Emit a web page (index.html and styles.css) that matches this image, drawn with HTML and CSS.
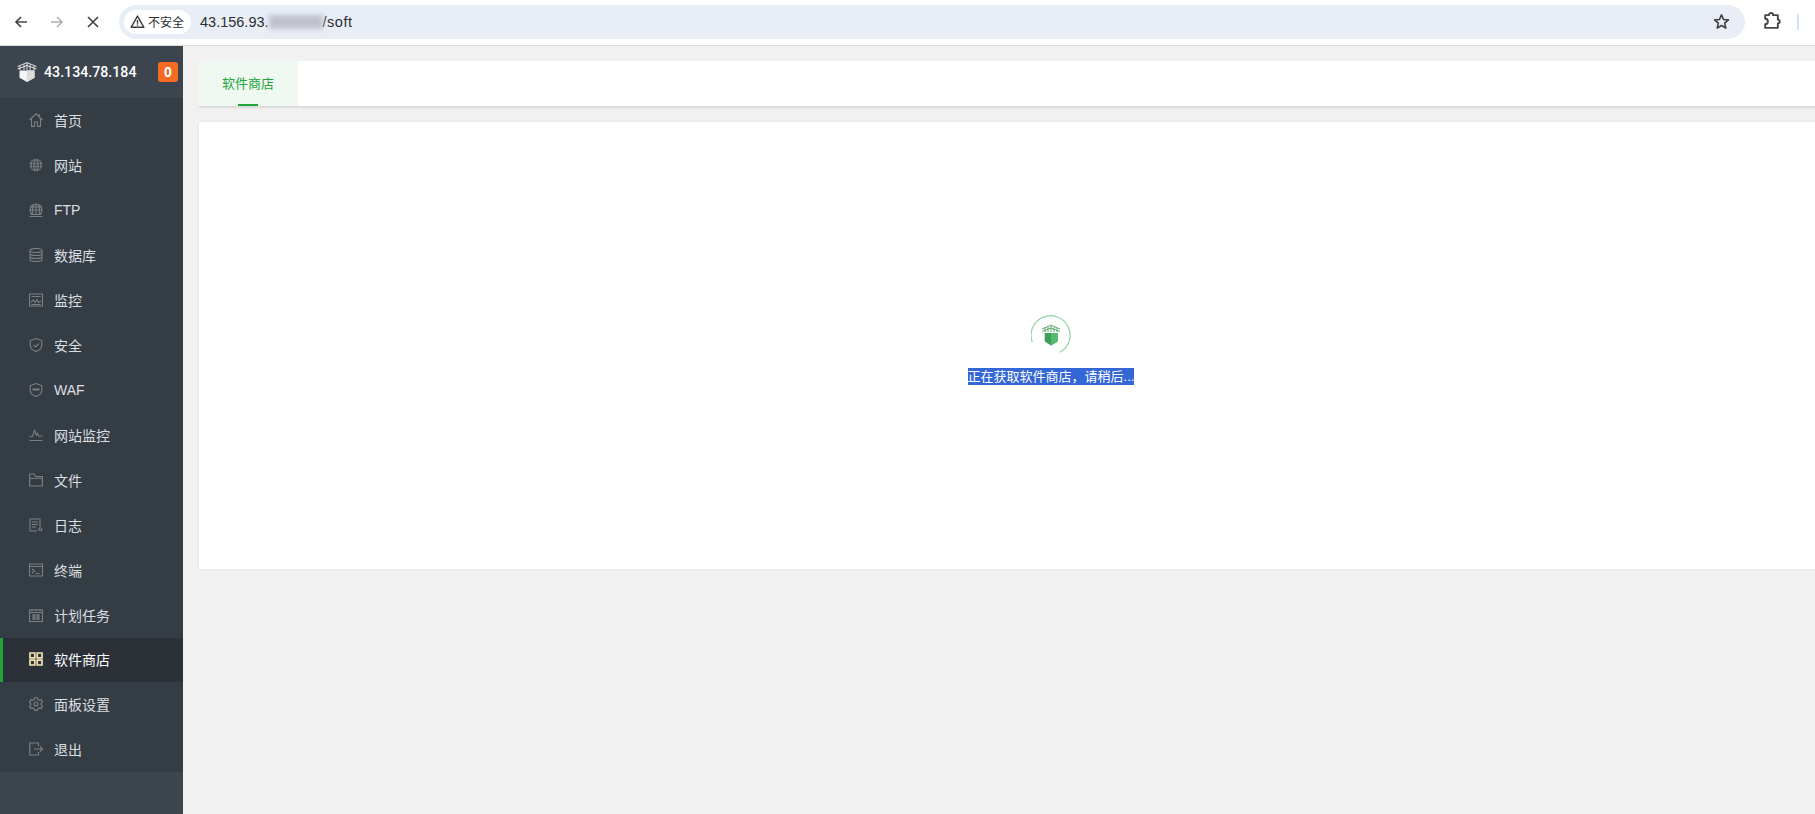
FILE: index.html
```html
<!DOCTYPE html>
<html lang="zh">
<head>
<meta charset="utf-8">
<title>软件商店</title>
<link rel="stylesheet" href="styles.css">
</head>
<body>
<header class="chrome">
  <svg class="nav-btn" viewBox="0 0 16 16"><path d="M14 8H3M8 3L3 8l5 5" class="st-dark"/></svg>
  <svg class="nav-btn" viewBox="0 0 16 16"><path d="M2 8h11M8 3l5 5-5 5" class="st-light"/></svg>
  <svg class="nav-btn" viewBox="0 0 16 16"><path d="M3 3l10 10M13 3L3 13" class="st-dark"/></svg>
  <div class="omnibox">
    <div class="chip">
      <svg class="warn" viewBox="0 0 16 16"><path d="M8 2.200L14.800 14.200H1.200z" class="st-warn"/><path d="M8 6.400v4M8 11.200v1.400" class="st-warn"/></svg>
      <span>不安全</span>
    </div>
    <div class="url">43.156.93.<span class="blur"></span><span class="url-path">/soft</span></div>
    <svg class="star" viewBox="0 0 16 16"><path d="M8 1.800l1.900 4.300 4.600.4-3.500 3.100 1 4.600L8 11.800l-4 2.400 1-4.600-3.500-3.100 4.600-.4z" class="st-warn"/></svg>
  </div>
  <svg class="ext" viewBox="0 0 18 18"><path d="M3 3h3.500a2 2 0 0 1 4 0H15v4.200a1.800 1.800 0 0 1 0 3.600V15H3v-3.400a2.600 2.600 0 0 0 0-5.200z" class="st-ext"/></svg>
  <div class="profile-edge"></div>
</header>

<div class="main">
  <aside class="sidebar">
    <div class="brand">
      <svg class="brand-logo" viewBox="0 0 20 20">
        <path d="M.5 4.500L10 .6l9.500 3.900M.5 7l9.500-3.500L19.500 7" class="logo-hat"/>
        <path d="M3 4v4M7 2.500V8M10 1v7M13 2.500V8M17 4v4" class="logo-hat"/>
        <path d="M2.500 8.500h15v7.300L10 20l-7.500-4.200z" fill="#f4f4f4"/>
        <path d="M10 8.500h7.500v7.300L10 20z" fill="#dcdcdc"/>
      </svg>
      <span class="brand-ip">43.134.78.184</span>
      <span class="badge">0</span>
    </div>
    <nav class="menu">
      <a class="item"><svg class="ico" viewBox="0 0 14 14"><path d="M.6 7L7 .8 13.400 7M2.500 5.600v7.800h3V9h3v4.400h3V5.600M10.200 1v2.500"/></svg><span>首页</span></a>
      <a class="item"><svg class="ico" viewBox="0 0 14 14"><circle cx="7" cy="7" r="6.300" class="solid"/><path d="M7 .7v12.600M.7 7h12.600M1.500 4h11M1.500 10h11M4.500 1.500c-1.500 3-1.500 8 0 11M9.500 1.500c1.500 3 1.500 8 0 11" class="cut"/></svg><span>网站</span></a>
      <a class="item"><svg class="ico" viewBox="0 0 14 14"><path d="M3 11.500C1.700 10.500 1 9 1 7a6 6 0 0 1 12 0c0 2-.7 3.500-2 4.500M7 1v10.500M1 7h12M1.800 4h10.400M4.500 1.700c-1.200 2.500-1.200 6.500-.5 9.800M9.500 1.700c1.200 2.500 1.200 6.500.5 9.800M2 11.500h10M.5 13.500h13"/></svg><span>FTP</span></a>
      <a class="item"><svg class="ico" viewBox="0 0 14 14"><ellipse cx="7" cy="2.500" rx="6" ry="2"/><path d="M1 2.500v9c0 1.100 2.700 2 6 2s6-.9 6-2v-9M1 5.500c0 1.100 2.700 2 6 2s6-.9 6-2M1 8.500c0 1.100 2.700 2 6 2s6-.9 6-2"/></svg><span>数据库</span></a>
      <a class="item"><svg class="ico" viewBox="0 0 14 14"><path d="M.5 1h13v12H.5zM2.500 3.500h9M2 9.500l2.200-2.500 1.800 2.500L8 6.500l1.500 3L12 8M2.500 11.500h9"/></svg><span>监控</span></a>
      <a class="item"><svg class="ico" viewBox="0 0 14 14"><path d="M7 .6l5.800 2v4.600c0 3-2.500 5.200-5.800 6.200-3.300-1-5.800-3.200-5.800-6.200V2.600zM4.500 7l2 2 3.300-3.500"/></svg><span>安全</span></a>
      <a class="item"><svg class="ico" viewBox="0 0 14 14"><path d="M7 .6l5.800 2v4.600c0 3-2.500 5.200-5.800 6.200-3.300-1-5.800-3.200-5.800-6.200V2.600z"/><path d="M3.500 5.500h7v2h-7z" class="solid"/></svg><span>WAF</span></a>
      <a class="item"><svg class="ico" viewBox="0 0 14 14"><path d="M.5 8.500h3l2-6L7.500 7l1-1.500 1 2.500h4M.5 12.500h13"/></svg><span>网站监控</span></a>
      <a class="item"><svg class="ico" viewBox="0 0 14 14"><path d="M.6 1h4.500l1.500 2.500h6.800V13H.6zM.6 5.500l12.800-.5"/></svg><span>文件</span></a>
      <a class="item"><svg class="ico" viewBox="0 0 14 14"><path d="M11 8.500V1H1v12h7M3 4h6M3 6.500h6M3 9h4"/><circle cx="11.300" cy="11.300" r="1.500"/></svg><span>日志</span></a>
      <a class="item"><svg class="ico" viewBox="0 0 14 14"><path d="M.5 1h13v12H.5zM.5 3.500h13M3 6l2.500 2L3 10M6.500 10.500h4"/></svg><span>终端</span></a>
      <a class="item"><svg class="ico" viewBox="0 0 14 14"><path d="M.5 2h13v11.500H.5zM.5 4.500h13M3 1v2M7 1v2M11 1v2M3 7h8M3 9h8M3 11h8M5 6v6M9 6v6"/></svg><span>计划任务</span></a>
      <a class="item active"><svg class="ico" viewBox="0 0 14 14"><path d="M1 1h4.800v4.800H1zM8.200 1H13v4.800H8.200zM1 8.200h4.800V13H1zM8.200 8.200H13V13H8.200z"/></svg><span>软件商店</span></a>
      <a class="item"><svg class="ico" viewBox="0 0 14 14"><path d="M5.500.8h3l.4 1.700 1.700.8 1.600-.6 1.300 2.500-1.300 1.100v1.500l1.300 1.200-1.300 2.500-1.600-.6-1.700.8-.4 1.700h-3l-.4-1.700-1.700-.8-1.600.6L.5 9.500l1.300-1.200V6.800L.5 5.200l1.300-2.500 1.600.6 1.700-.8z"/><circle cx="7" cy="7" r="2"/></svg><span>面板设置</span></a>
      <a class="item"><svg class="ico" viewBox="0 0 14 14"><path d="M9.500 4V1H.8v12h8.700v-3M5 7h8.500M11 4.500L13.500 7 11 9.500"/></svg><span>退出</span></a>
    </nav>
  </aside>

  <main class="content">
    <div class="tabs">
      <div class="tab">软件商店</div>
    </div>
    <section class="card">
      <svg class="spinner" viewBox="0 0 40 40">
        <path d="M1.200 26.800A19.500 19.500 0 1 1 29 37.300" class="spin-arc"/>
        <path d="M11 14L20 10.200 29 14M11 16.500L20 13l9 3.500" class="spin-hat"/>
        <path d="M14 13v4M17 12v5M20 11v6M23 12v5M26 13v4" class="spin-hat"/>
        <path d="M13.700 18h13v8.500L20 30.500l-6.300-4z" class="spin-shield"/>
        <path d="M20 18h6.700v8.500L20 30.500z" class="spin-shield-light"/>
      </svg>
      <p class="loading"><span class="selected">正在获取软件商店，请稍后...</span></p>
    </section>
  </main>
</div>
</body>
</html>
```
FILE: styles.css
```css
* { box-sizing: border-box; }
html, body { margin: 0; height: 100%; overflow: hidden; }
body {
  display: flex;
  flex-direction: column;
  background: #f1f1f1;
  font-family: "Liberation Sans", "Noto Sans CJK SC", sans-serif;
}

/* browser chrome */
.chrome {
  flex: none;
  height: 46px;
  display: flex;
  align-items: center;
  padding: 0 0 2px 13px;
  background: #fff;
  border-bottom: 1px solid #dcdcdc;
}
.nav-btn { width: 16px; height: 16px; margin-right: 20px; fill: none; }
.st-dark { fill: none; stroke: #44474a; stroke-width: 1.700; }
.st-light { fill: none; stroke: #aeb0b3; stroke-width: 1.500; }
.st-warn { fill: none; stroke: #3b3d40; stroke-width: 1.500; stroke-linejoin: round; }
.st-ext { fill: none; stroke: #44474a; stroke-width: 1.800; stroke-linejoin: round; }
.omnibox {
  width: 1626px;
  height: 34px;
  margin-left: -2px;
  display: flex;
  align-items: center;
  padding: 0 15px 0 5px;
  background: #e9edf6;
  border-radius: 17px;
}
.chip {
  height: 24px;
  width: 67px;
  display: flex;
  align-items: center;
  gap: 3px;
  padding-left: 6px;
  background: #fff;
  border-radius: 12px;
  font-size: 12px;
  color: #2c2e30;
  white-space: nowrap;
}
.warn { width: 15px; height: 15px; flex: none; }
.url {
  margin-left: 9px;
  flex: 1;
  font-size: 14.500px;
  color: #2b2d30;
  display: flex;
  align-items: center;
}
.blur {
  width: 54px;
  height: 14px;
  background: #bfc3cd;
  filter: blur(2.500px);
}
.url-path { letter-spacing: .5px; }
.star { width: 17px; height: 17px; flex: none; }
.ext { width: 19px; height: 19px; margin-left: 17px; flex: none; }
.profile-edge { width: 2px; height: 16px; margin-left: 16px; background: #d3e3fd; }

/* layout */
.main {
  flex: 1;
  min-height: 0;
  display: flex;
  overflow: hidden;
}
.sidebar {
  flex: none;
  width: 183px;
  background: #3c444d;
}
.brand {
  height: 52px;
  display: flex;
  align-items: center;
  padding: 0 5px 0 17px;
  color: #fff;
}
.brand-logo { width: 20px; height: 20px; flex: none; }
.logo-hat { fill: none; stroke: #f4f4f4; stroke-width: .9; }
.brand-ip {
  margin-left: 7px;
  font-family: "Roboto", sans-serif;
  font-size: 14.200px;
  font-weight: 500;
}
.badge {
  margin-left: auto;
  width: 20px;
  height: 20px;
  display: flex;
  align-items: center;
  justify-content: center;
  background: #f56b24;
  border-radius: 3px;
  font-size: 14px;
  font-weight: 700;
}
.menu { background: #353d44; }
.item {
  height: 45px;
  display: flex;
  align-items: center;
  padding: 0 0 2px 29px;
  gap: 11px;
  font-size: 14px;
  color: #dcdfe2;
}
.ico {
  width: 14px;
  height: 14px;
  flex: none;
  fill: none;
  stroke: #7d8083;
  stroke-width: 1.100;
}
.ico .solid { fill: #7d8083; stroke: none; }
.ico .cut { stroke: #353d44; stroke-width: .8; }
.item.active {
  height: 44px;
  padding-left: 26px;
  border-left: 3px solid #20a53a;
  background: #2c3138;
  color: #fff;
}
.item.active .ico { stroke: #f3e3b5; stroke-width: 1.700; }

/* content */
.content {
  flex: none;
  width: 1736px;
  padding: 15px 16px 0 15px;
}
.tabs {
  height: 45px;
  background: #fff;
  border-radius: 3px 0 0 3px;
  box-shadow: 0 3px 2px -1px rgba(0, 0, 0, .1);
}
.tab {
  position: relative;
  width: 100px;
  height: 45px;
  line-height: 45px;
  text-align: center;
  font-size: 13px;
  color: #20a53a;
  background: #eff8f1;
  border-radius: 3px 0 0 3px;
}
.tab::after {
  content: "";
  position: absolute;
  left: 40px;
  bottom: 0;
  width: 20px;
  height: 2px;
  background: #20a53a;
}
.card {
  height: 447px;
  margin: 16px 0 0 1px;
  padding-top: 193px;
  display: flex;
  flex-direction: column;
  align-items: center;
  background: #fff;
  box-shadow: 0 0 3px rgba(0, 0, 0, .08);
}
.spinner { width: 40px; height: 40px; flex: none; }
.spin-arc { fill: none; stroke: #8fd3a0; stroke-width: 1.200; }
.spin-hat { fill: none; stroke: #4f9f63; stroke-width: .9; }
.spin-shield { fill: #3f9e58; }
.spin-shield-light { fill: #55bb6c; }
.loading {
  margin: 13px 0 0;
  font-size: 13px;
  line-height: 17px;
}
.selected { display: block; background: #3367d6; color: #fff; white-space: nowrap; }
```
